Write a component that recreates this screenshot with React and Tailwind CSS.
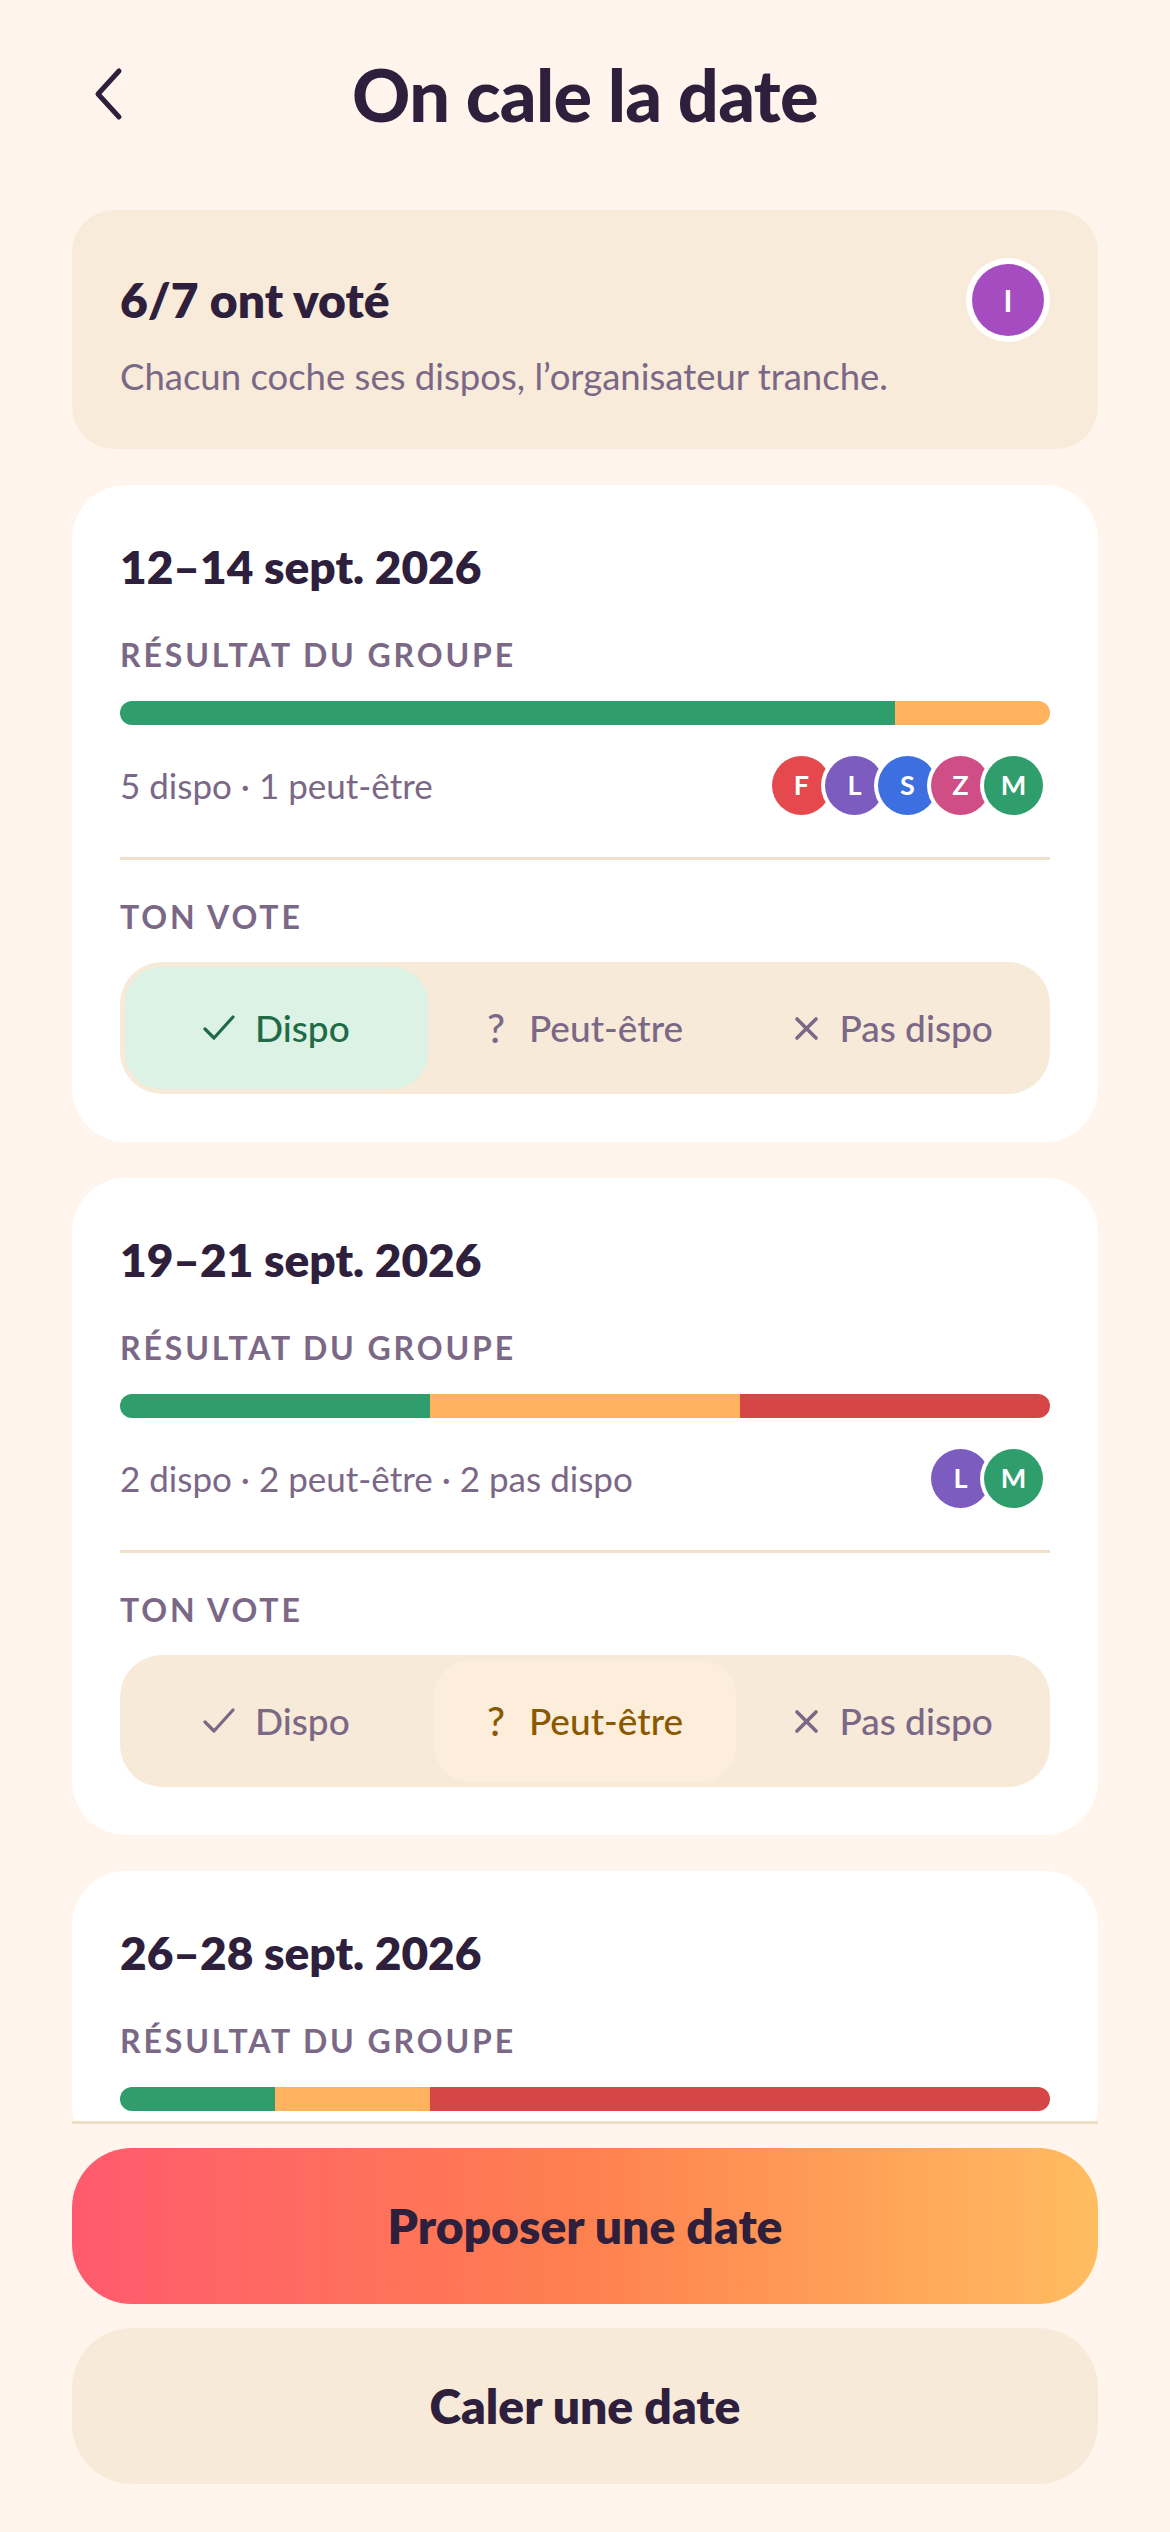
import React from 'react';

const dates = [
  {
    label: '12–14 sept. 2026',
    bar: [5, 1, 0],
    stats: '5 dispo · 1 peut-être',
    voters: ['F', 'L', 'S', 'Z', 'M'],
    vote: 'yes',
  },
  {
    label: '19–21 sept. 2026',
    bar: [2, 2, 2],
    stats: '2 dispo · 2 peut-être · 2 pas dispo',
    voters: ['L', 'M'],
    vote: 'maybe',
  },
  {
    // only the top of this card is above the action bar
    label: '26–28 sept. 2026',
    bar: [1, 1, 4],
    partial: true,
  },
];

const avatarColors = {
  F: 'bg-[#e5484d]',
  L: 'bg-[#7d5cc0]',
  S: 'bg-[#3e6fe0]',
  Z: 'bg-[#d04e86]',
  M: 'bg-[#2f9e6c]',
};

function CheckIcon() {
  return (
    <svg width="32" height="26" viewBox="0 0 32 26" fill="none">
      <path d="M2 14 L11 23 L30 2" stroke="currentColor" strokeWidth="3.2" strokeLinecap="round" strokeLinejoin="round" />
    </svg>
  );
}

function XIcon() {
  return (
    <svg width="25" height="25" viewBox="0 0 25 25" fill="none">
      <path d="M3 3 L22 22 M22 3 L3 22" stroke="currentColor" strokeWidth="3.6" strokeLinecap="round" />
    </svg>
  );
}

function VoteControl({ vote }) {
  const base = 'h-[122px] rounded-[36px] flex items-center justify-center gap-[20px] text-[37px] font-medium';
  return (
    <div className="mt-[25px] h-[132px] rounded-[42px] bg-[#f8ead9] p-[5px] grid grid-cols-3 gap-[6px]">
      <div className={vote === 'yes' ? `${base} bg-[#dcf2e4] text-[#1f6b47]` : `${base} text-[#7a6886]`}>
        <CheckIcon />
        <span>Dispo</span>
      </div>
      <div className={vote === 'maybe' ? `${base} bg-[#fdeedb] text-[#8a5800]` : `${base} text-[#7a6886]`}>
        <span className="text-[40px] mr-[4px]">?</span>
        <span>Peut-être</span>
      </div>
      <div className={vote === 'no' ? `${base} bg-[#fbe1de] text-[#b03636]` : `${base} text-[#7a6886]`}>
        <XIcon />
        <span>Pas dispo</span>
      </div>
    </div>
  );
}

function DateCard({ item }) {
  const total = item.bar[0] + item.bar[1] + item.bar[2];
  return (
    <div className="bg-white rounded-[54px] px-[48px] pt-[54px] pb-[48px] shrink-0">
      <h2 className="text-[46px] leading-[56px] font-extrabold text-[#2e1f3c]">{item.label}</h2>
      <p className="mt-[40px] text-[32px] leading-[40px] font-bold tracking-[0.09em] text-[#7a6886]">RÉSULTAT DU GROUPE</p>
      <div className="mt-[26px] h-[24px] rounded-full overflow-hidden flex">
        <div className="bg-[#2f9e6c] h-full" style={{ width: `${(item.bar[0] / total) * 100}%` }} />
        <div className="bg-[#ffb35e] h-full" style={{ width: `${(item.bar[1] / total) * 100}%` }} />
        <div className="bg-[#d64646] h-full" style={{ width: `${(item.bar[2] / total) * 100}%` }} />
      </div>
      {!item.partial && (
        <>
          <div className="mt-[30px] h-[60px] flex items-center justify-between">
            <span className="text-[35px] text-[#7a6886]">{item.stats}</span>
            <div className="flex items-center mr-[7px]">
              {item.voters.map((v, i) => (
                <div
                  key={v}
                  className={`w-[59px] h-[59px] rounded-full ring-[4px] ring-white flex items-center justify-center text-white text-[27px] font-bold ${avatarColors[v]} ${i > 0 ? '-ml-[6px]' : ''}`}
                >
                  {v}
                </div>
              ))}
            </div>
          </div>
          <div className="mt-[42px] h-[3px] bg-[#f0e0c9]" />
          <p className="mt-[37px] text-[32px] leading-[40px] font-bold tracking-[0.09em] text-[#7a6886]">TON VOTE</p>
          <VoteControl vote={item.vote} />
        </>
      )}
    </div>
  );
}

export default function App() {
  return (
    <div
      className="h-[2532px] w-full bg-[#fff5ec] flex flex-col overflow-hidden"
      style={{ fontFamily: 'Lato, "Noto Sans", sans-serif' }}
    >
      {/* Header */}
      <header className="h-[188px] shrink-0 px-[72px] grid grid-cols-[120px_1fr_120px] items-center">
        <button className="w-[40px] h-[60px] ml-[16px] flex items-center justify-center text-[#2e1f3c]">
          <svg width="36" height="56" viewBox="0 0 36 56" fill="none">
            <path d="M29 5 L8 28 L29 51" stroke="currentColor" strokeWidth="5" strokeLinecap="round" strokeLinejoin="round" />
          </svg>
        </button>
        <h1 className="text-center text-[72px] font-black tracking-[-0.01em] text-[#2e1f3c] leading-none">On cale la date</h1>
        <div />
      </header>

      {/* Scroll area */}
      <main className="flex-1 min-h-0 overflow-hidden px-[72px] pt-[22px] flex flex-col gap-[36px]">
        <div className="bg-[#f8ebda] rounded-[42px] p-[48px] shrink-0">
          <div className="h-[84px] flex items-center justify-between">
            <h2 className="text-[48px] font-extrabold text-[#2e1f3c]">6/7 ont voté</h2>
            <div className="w-[72px] h-[72px] mr-[6px] rounded-full bg-[#a64cc1] ring-[6px] ring-white flex items-center justify-center text-white text-[30px] font-bold">
              I
            </div>
          </div>
          <p className="mt-[9px] text-[36.5px] leading-[50px] text-[#7a6886]">Chacun coche ses dispos, l’organisateur tranche.</p>
        </div>
        {dates.map((d) => (
          <DateCard key={d.label} item={d} />
        ))}
      </main>

      {/* Footer */}
      <footer className="shrink-0 px-[72px]">
        <div className="border-t-[3px] border-[#efdfc7] pt-[24px] pb-[48px] flex flex-col gap-[24px]">
          <button className="h-[156px] rounded-[60px] bg-[linear-gradient(90deg,#ff5a6e_0%,#ff804f_50%,#ffbd60_100%)] text-[48px] font-extrabold text-[#2e1f3c]">
            Proposer une date
          </button>
          <button className="h-[156px] rounded-[60px] bg-[#f8ead9] text-[48px] font-extrabold text-[#2e1f3c]">
            Caler une date
          </button>
        </div>
      </footer>
    </div>
  );
}
